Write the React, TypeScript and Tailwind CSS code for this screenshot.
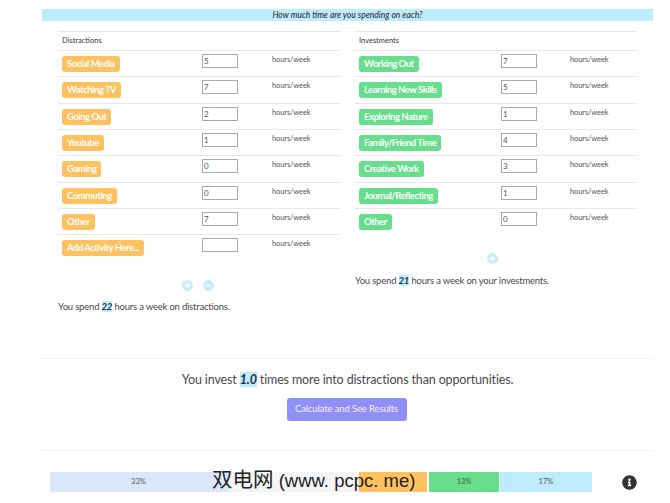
import { FaInfoCircle, FaMinusCircle, FaPlusCircle } from 'react-icons/fa'

const distractions = [
  ['Social Media', '5'],
  ['Watching TV', '7'],
  ['Going Out', '2'],
  ['Youtube', '1'],
  ['Gaming', '0'],
  ['Commuting', '0'],
  ['Other', '7'],
  ['Add Activity Here...', ''],
]

const investments = [
  ['Working Out', '7'],
  ['Learning New Skills', '5'],
  ['Exploring Nature', '1'],
  ['Family/Friend Time', '4'],
  ['Creative Work', '3'],
  ['Journal/Reflecting', '1'],
  ['Other', '0'],
]

function ActivityTable({ title, rows, pill, nameCol, valueCol }: { title: string; rows: string[][]; pill: string; nameCol: string; valueCol: string }) {
  return (
    <div className="w-[282px]">
      <div className="h-[19px] border-t border-[#e8e8e8] pl-1 pt-[3px] text-[7.5px] leading-[12px] text-[#333]">{title}</div>
      {rows.map(([name, value]) => (
        <div key={name} className="flex h-[26.33px] border-t border-[#e8e8e8] pl-1 pt-[3px]">
          <div className={`shrink-0 ${nameCol}`}>
            <div className={`mt-[2px] h-[16px] w-fit rounded-[3px] px-[5px] text-[9.5px] font-bold leading-[16px] tracking-[-0.5px] text-[#fdfdfd] ${pill}`}>
              {name}
            </div>
          </div>
          <div className={`shrink-0 ${valueCol}`}>
            <input
              readOnly
              value={value}
              className="block h-[14px] w-[36px] border border-[#aaa] bg-white pl-[1px] text-[8px] text-[#555] outline-none"
            />
          </div>
          <div className="text-[7.5px] leading-[11px] tracking-[-0.1px] text-[#555]">hours/week</div>
        </div>
      ))}
    </div>
  )
}

function Total({ value, children }: { value: string; children: string }) {
  return (
    <p className="text-[9.5px] leading-[14px] tracking-[-0.2px] text-[#4a4a4a]">
      You spend <em className="bg-[#bfecfd] font-bold italic text-[#234]">{value}</em> {children}
    </p>
  )
}

export default function App() {
  return (
    <div className="relative h-[503px] w-[670px] overflow-hidden bg-white pl-[42px] pt-[9px] font-['Lato','Noto_Sans_CJK_SC',sans-serif]">
      <div className="w-[611px]">
        <div className="h-[12px] bg-[#bfecfd] text-center text-[8.5px] font-medium italic leading-[12px] text-[#333]">
          How much time are you spending on each?
        </div>

        <div className="mt-[10px] flex h-[327px] gap-[15px] px-4">
          <div>
            <ActivityTable title="Distractions" rows={distractions} pill="bg-[#fdc25f]" nameCol="w-[140px]" valueCol="w-[70px]" />
            <div className="mt-[19px] flex justify-center gap-[10.5px] pr-[2px] text-[11px] text-[#bfecfd]">
              <FaPlusCircle />
              <FaMinusCircle />
            </div>
            <div className="mt-[9px]">
              <Total value="22">hours a week on distractions.</Total>
            </div>
          </div>
          <div>
            <ActivityTable title="Investments" rows={investments} pill="bg-[#66de8b]" nameCol="w-[142px]" valueCol="w-[69px]" />
            <div className="mt-[19px] flex justify-center pr-2 text-[11px] text-[#bfecfd]">
              <FaPlusCircle />
            </div>
            <div className="mt-[10px]">
              <Total value="21">hours a week on your investments.</Total>
            </div>
          </div>
        </div>

        <div className="flex h-[92px] flex-col items-center border-t border-[#f0f0f0] pt-[12px]">
          <p className="text-[12.5px] leading-[17px] tracking-[-0.14px] text-[#4a4a4a]">
            You invest <em className="bg-[#bfecfd] font-bold italic text-[#234]">1.0</em> times more into distractions than opportunities.
          </p>
          <button className="mr-[2px] mt-[10px] h-[23px] w-[120px] rounded-[3px] bg-[#8f8ff7] text-[9.5px] tracking-[-0.12px] text-[#f4f4ff]">
            Calculate and See Results
          </button>
        </div>

        <div className="flex items-center border-t border-[#f0f0f0] pl-2 pt-[21px]">
          <div className="flex h-[20px] w-[542px] text-center text-[7.5px] leading-[20px] text-[#555]">
            <div className="w-[33%] bg-[#dbe8fc] pr-[2px]">33%</div>
            <div className="w-[24%] bg-[#f5f5f5]" />
            <div className="w-[13%] border-r-2 border-white bg-[#fdc25f]" />
            <div className="w-[13%] border-r border-white bg-[#66de8b]">13%</div>
            <div className="w-[17%] bg-[#bfecfd]">17%</div>
          </div>
          <FaInfoCircle className="ml-[30px] text-[15px] text-[#333]" />
        </div>
      </div>

      <div className="absolute left-[212px] top-[467px] text-[18.5px] leading-[26px] text-[#222] font-['Liberation_Sans','Noto_Sans_CJK_SC',sans-serif]">
        <span className="text-[20.5px]">双电网</span> (www. pcpc. me)
      </div>
    </div>
  )
}
